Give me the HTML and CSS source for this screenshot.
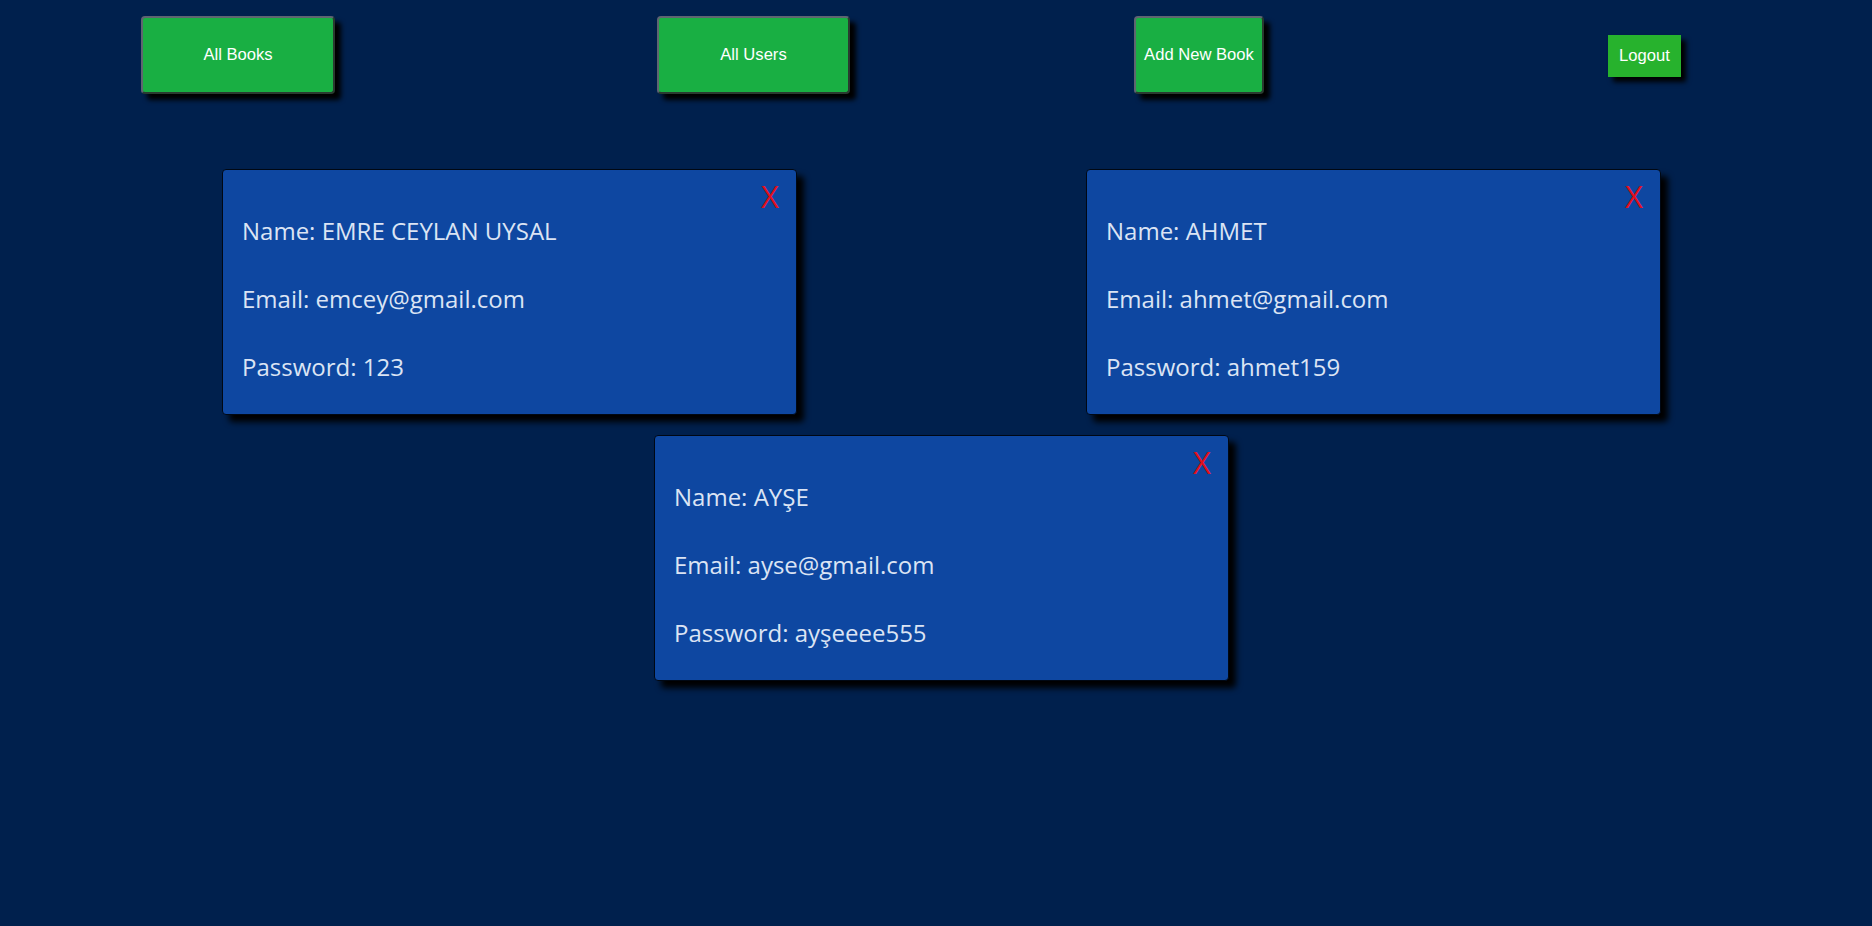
FILE: index.html
```html
<!DOCTYPE html>
<html lang="tr">
<head>
<meta charset="utf-8">
<title>All Users</title>
<link rel="stylesheet" href="styles.css">
</head>
<body>
<nav class="nav">
  <button class="nav-btn btn-books">All Books</button>
  <button class="nav-btn btn-users">All Users</button>
  <button class="nav-btn btn-add">Add New Book</button>
  <button class="logout">Logout</button>
</nav>
<main class="users">
  <div class="card">
    <div class="card-head"><span class="close">X</span></div>
    <p class="line">Name: EMRE CEYLAN UYSAL</p>
    <p class="line">Email: emcey@gmail.com</p>
    <p class="line">Password: 123</p>
  </div>
  <div class="card">
    <div class="card-head"><span class="close">X</span></div>
    <p class="line">Name: AHMET</p>
    <p class="line">Email: ahmet@gmail.com</p>
    <p class="line">Password: ahmet159</p>
  </div>
  <div class="card">
    <div class="card-head"><span class="close">X</span></div>
    <p class="line">Name: AYŞE</p>
    <p class="line">Email: ayse@gmail.com</p>
    <p class="line">Password: ayşeeee555</p>
  </div>
</main>
</body>
</html>
```
FILE: styles.css
```css
html, body {
  margin: 0;
  padding: 0;
  min-height: 100%;
  background: #00204d;
}
body {
  min-height: 926px;
  font-family: "Liberation Sans", Arial, sans-serif;
}
.nav {
  display: flex;
  align-items: center;
  padding: 16px 0 0 141px;
}
.nav-btn {
  height: 78px;
  box-sizing: border-box;
  background: #19af43;
  color: #ffffff;
  font-family: "Liberation Sans", Arial, sans-serif;
  font-size: 16.6px;
  border: 2px solid #5e6570;
  border-right-color: #2a3a30;
  border-bottom-color: #2a3a30;
  border-radius: 4px;
  box-shadow: 6px 6px 5px #000;
  padding: 0;
  cursor: pointer;
}
.btn-books { width: 194px; }
.btn-users { width: 193px; margin-left: 322px; }
.btn-add { width: 130px; margin-left: 284px; }
.logout {
  width: 73px;
  height: 42px;
  margin-left: 344px;
  margin-top: 2px;
  background: #27b22d;
  color: #ffffff;
  border: none;
  padding: 0;
  font-family: "Liberation Sans", Arial, sans-serif;
  font-size: 16.6px;
  box-shadow: 5px 5px 5px #000;
  cursor: pointer;
}
.users {
  display: flex;
  flex-wrap: wrap;
  justify-content: center;
  row-gap: 20px;
  padding-top: 75px;
}
.card {
  width: 575px;
  box-sizing: border-box;
  margin: 0 139px 0 150px;
  background: #0e47a1;
  border: 1px solid #000814;
  border-radius: 4px;
  box-shadow: 7px 7px 6px #000;
  padding: 8px 17px 31px 19px;
  display: flex;
  flex-direction: column;
  gap: 36px;
  font-family: "Open Sans", "Noto Sans", sans-serif;
  color: #dbe4f4;
}
.card-head {
  display: flex;
  justify-content: flex-end;
  height: 32px;
  margin-bottom: -31px;
}
.close {
  color: #e0101c;
  font-size: 31px;
  line-height: 32px;
  margin-top: 2px;
  cursor: pointer;
}
.line {
  margin: 0;
  font-size: 24px;
  line-height: 32px;
}
```
